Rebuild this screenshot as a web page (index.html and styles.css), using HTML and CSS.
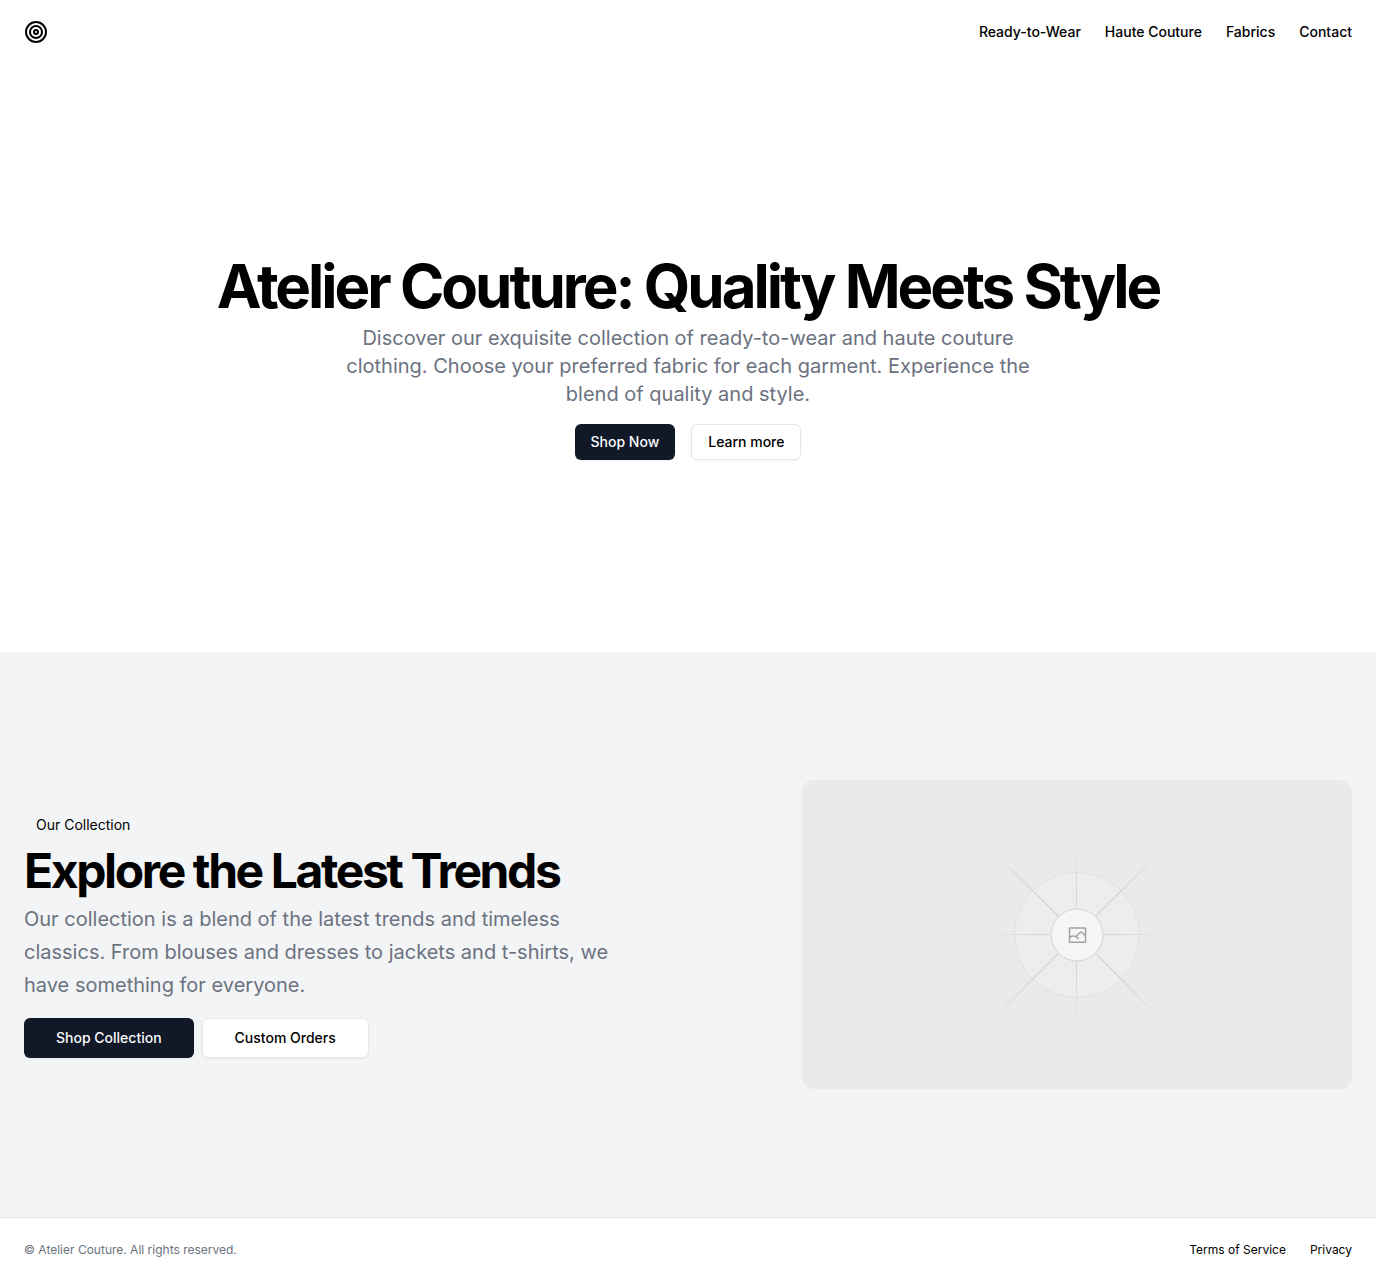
FILE: index.html
```html
<!DOCTYPE html>
<html lang="en">
<head>
<meta charset="utf-8">
<meta name="viewport" content="width=device-width, initial-scale=1">
<title>Atelier Couture</title>
<link rel="stylesheet" href="styles.css">
</head>
<body>
<div class="page">
  <header class="site-header">
    <a class="logo" href="#" aria-label="Atelier Couture">
      <svg width="24" height="24" viewBox="0 0 24 24" fill="none" stroke="currentColor" stroke-width="2"><circle cx="12" cy="12" r="10"/><circle cx="12" cy="12" r="6"/><circle cx="12" cy="12" r="2"/></svg>
    </a>
    <nav class="site-nav">
      <a href="#">Ready-to-Wear</a>
      <a href="#">Haute Couture</a>
      <a href="#">Fabrics</a>
      <a href="#">Contact</a>
    </nav>
  </header>
  <main>
    <section class="hero">
      <h1 class="hero-title">Atelier Couture: Quality Meets Style</h1>
      <p class="lead hero-text">Discover our exquisite collection of ready-to-wear and haute couture clothing. Choose your preferred fabric for each garment. Experience the blend of quality and style.</p>
      <div class="hero-actions">
        <button class="button button-dark" type="button">Shop Now</button>
        <button class="button button-light" type="button">Learn more</button>
      </div>
    </section>
    <section class="collection">
      <div class="collection-copy">
        <span class="tag">Our Collection</span>
        <h2 class="collection-title">Explore the Latest Trends</h2>
        <p class="lead collection-text">Our collection is a blend of the latest trends and timeless classics. From blouses and dresses to jackets and t-shirts, we have something for everyone.</p>
        <div class="collection-actions">
          <button class="button button-large button-dark" type="button">Shop Collection</button>
          <button class="button button-large button-light" type="button">Custom Orders</button>
        </div>
      </div>
      <div class="placeholder">
        <svg width="176" height="176" viewBox="-88 -88 176 176" fill="none" role="img" aria-label="Image placeholder">
          <defs>
            <radialGradient id="fade-axis" gradientUnits="userSpaceOnUse" cx="0" cy="0" r="90">
              <stop offset="0.5" stop-color="#d6d6d6"/><stop offset="1" stop-color="#d6d6d6" stop-opacity="0"/>
            </radialGradient>
            <radialGradient id="fade-diagonal" gradientUnits="userSpaceOnUse" cx="0" cy="0" r="126">
              <stop offset="0.5" stop-color="#d6d6d6"/><stop offset="1" stop-color="#d6d6d6" stop-opacity="0"/>
            </radialGradient>
          </defs>
          <circle r="62.5" fill="#ededed" stroke="#e1e1e1"/>
          <path d="M-86-.5H86M-.5-86V86" stroke="url(#fade-axis)"/>
          <path d="M-86-86L86 86M86-86L-86 86" stroke="url(#fade-diagonal)" stroke-width="1.400"/>
          <circle r="26" fill="#f5f5f5" stroke="#d4d4d4"/>
          <path d="M-7.500-7H8.500V7.250H-7.500ZM-7.500 3Q-6 .5-3.500 1Q-.5 1 1.500 4M-1 1.500L3-2.500Q4-3.500 5-2.500L8.500 1" stroke="#a3a3a3" stroke-width="1.500" stroke-linejoin="round"/>
        </svg>
      </div>
    </section>
  </main>
  <footer class="site-footer">
    <p class="copyright">© Atelier Couture. All rights reserved.</p>
    <nav class="footer-nav">
      <a href="#">Terms of Service</a>
      <a href="#">Privacy</a>
    </nav>
  </footer>
</div>
</body>
</html>
```
FILE: styles.css
```css
*, *::before, *::after { box-sizing: border-box; }
body { margin: 0; background: #fff; color: #000; font-family: Inter, "Liberation Sans", sans-serif; font-size: 16px; line-height: 24px; }
h1, h2, p { margin: 0; }
a { color: inherit; text-decoration: none; }
button { font: inherit; cursor: pointer; }
svg { display: block; }
.page { min-height: 100vh; display: flex; flex-direction: column; }
main { flex: 1; display: flex; flex-direction: column; }
.site-header { height: 64px; padding: 0 24px; display: flex; align-items: center; justify-content: space-between; }
.site-nav { display: flex; gap: 24px; font-size: 14px; line-height: 20px; font-weight: 500; }
.hero { padding: 192px 24px; display: flex; flex-direction: column; align-items: center; text-align: center; }
.hero-title { font-size: 60px; line-height: 60px; font-weight: 700; letter-spacing: -0.05em; }
.lead { color: #6b7280; font-size: 20px; }
.hero-text { max-width: 700px; margin-top: 8px; line-height: 28px; }
.hero-actions { display: flex; gap: 16px; margin-top: 16px; }
.button { height: 36px; padding: 0 16px; border: 1px solid transparent; border-radius: 6px; font-size: 14px; line-height: 20px; font-weight: 500; box-shadow: 0 1px 2px rgba(0, 0, 0, .05); white-space: nowrap; }
.button-dark { background: #111827; color: #f9fafb; border: 0; }
.button-light { background: #fff; color: #000; border-color: #e5e7eb; }
.button-large { height: 40px; padding: 0 32px; }
.collection { flex: 1; padding: 128px 24px; background: #f3f4f6; display: grid; grid-template-columns: minmax(0, 1fr) 550px; gap: 48px; align-items: center; align-content: start; }
.collection-copy { display: flex; flex-direction: column; align-items: flex-start; }
.tag { padding: 4px 12px; font-size: 14px; line-height: 20px; }
.collection-title { margin-top: 8px; font-size: 48px; line-height: 48px; font-weight: 700; letter-spacing: -0.05em; }
.collection-text { max-width: 600px; margin-top: 8px; line-height: 33px; }
.collection-actions { display: flex; gap: 8px; margin-top: 16px; }
.placeholder { aspect-ratio: 16 / 9; border-radius: 12px; background: #eaeaea; display: flex; align-items: center; justify-content: center; }
.site-footer { padding: 24px; border-top: 1px solid #e5e7eb; display: flex; justify-content: space-between; font-size: 12px; line-height: 16px; }
.copyright { color: #6b7280; }
.footer-nav { display: flex; gap: 24px; }

@media (max-width: 1100px) {
  .collection { grid-template-columns: minmax(0, 1fr); }
}
@media (max-width: 640px) {
  .hero { padding: 96px 24px; }
  .hero-title, .collection-title { font-size: 36px; line-height: 40px; }
  .collection { padding: 64px 24px; }
}
```
